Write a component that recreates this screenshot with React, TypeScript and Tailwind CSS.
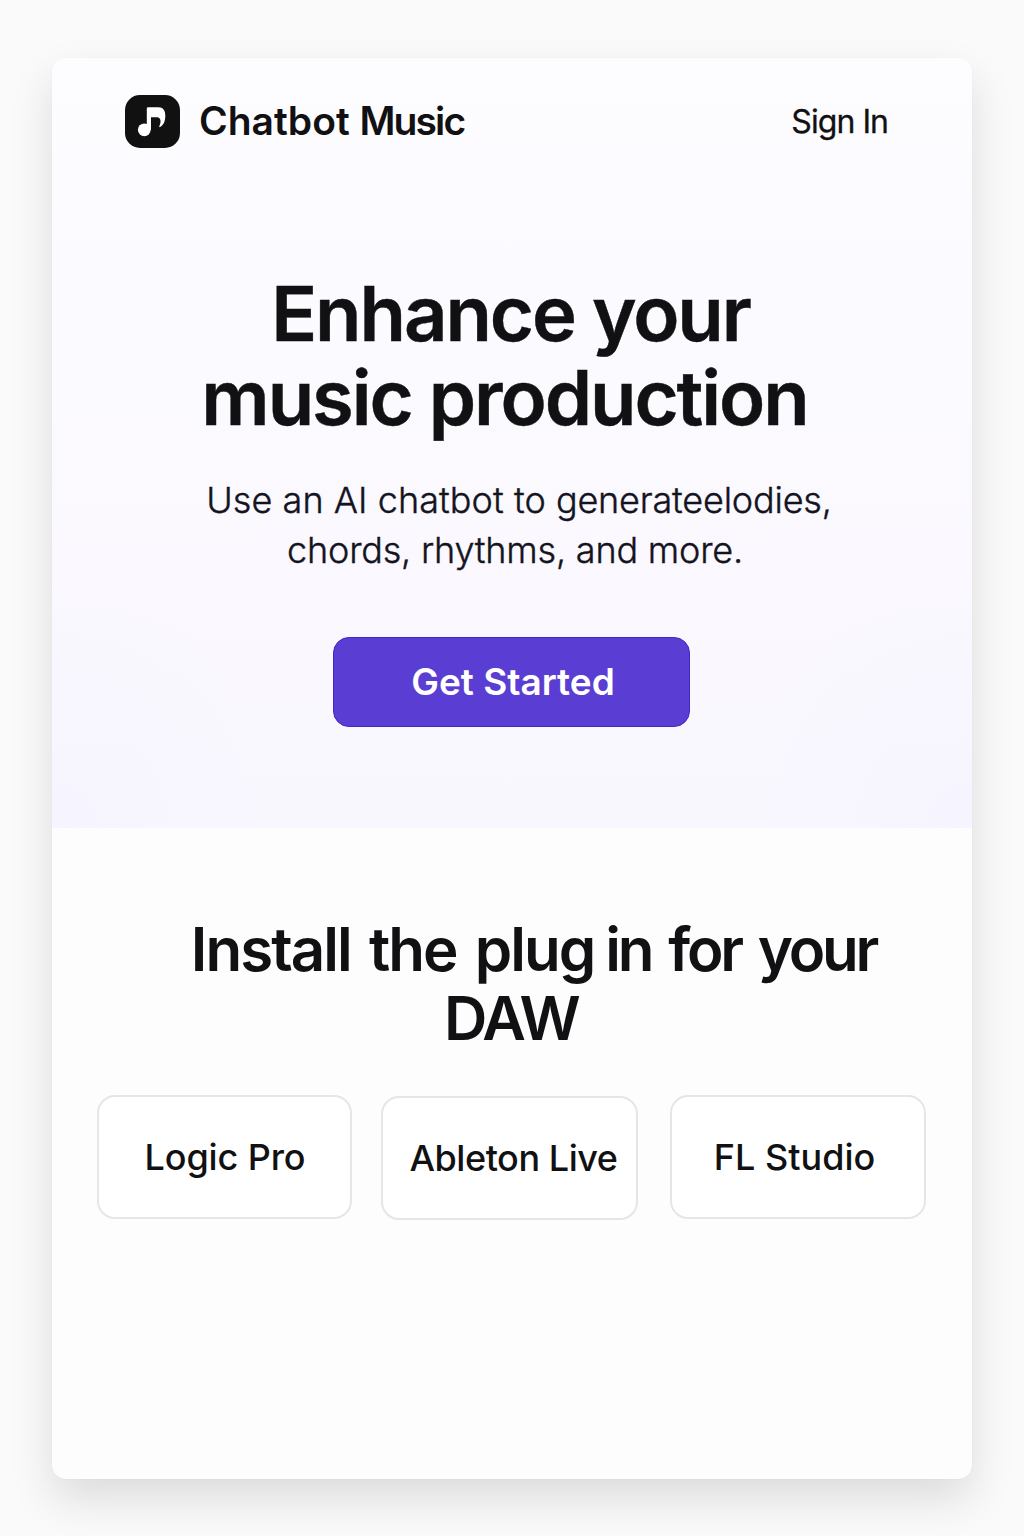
const plugins = [
  { name: 'Logic Pro', card: 'w-[255px] pl-px tracking-[-0.1px]' },
  { name: 'Ableton Live', card: 'ml-[29px] mt-px w-[257px] pb-px pl-[8px] tracking-[-0.45px]' },
  { name: 'FL Studio', card: 'ml-8 w-[256px] pr-[7px]' },
];

function Logo() {
  return (
    <svg width="55" height="53" viewBox="0 0 55 53" className="shrink-0">
      <rect width="55" height="53" rx="15" fill="#111112" />
      <circle cx="19.300" cy="34.800" r="6.400" fill="#fff" />
      <path d="M21.800 35V13.500Q21.800 12.300 23 12.300H33.500C38 12.300 40.300 15.500 40.300 20.500C40.300 26.500 38.500 30.500 34.500 32.200L34.200 31.500C36 28 36.500 23 32.500 22.300H26V35Z" fill="#fff" />
    </svg>
  );
}

export default function App() {
  return (
    <div className="h-[1536px] w-[1024px] overflow-hidden bg-[#fafafa] px-[52px] pt-[58px] font-['Inter',sans-serif] text-[#111113]">
      <main className="flex h-[1421px] flex-col overflow-hidden rounded-[14px] bg-[#fefdfe] shadow-[0_0_1px_rgba(0,0,0,0.08),0_20px_44px_rgba(0,0,0,0.12)]">
        <section className="h-[770px] shrink-0 bg-[radial-gradient(circle_at_0%_100%,#f6f4fe,transparent_240px),radial-gradient(circle_at_100%_100%,#f6f4fe,transparent_240px),linear-gradient(#fdfcff,#f9f7fe)]">
          <header className="flex h-[126px] items-center pl-[73px] pr-[84px]">
            <Logo />
            <span className="ml-[19px] whitespace-nowrap text-[39px] font-semibold">Chatbot <span className="tracking-[-1.9px]">Music</span></span>
            <a className="ml-auto whitespace-nowrap pt-[2px] text-[32px] tracking-[-0.95px] [-webkit-text-stroke:0.3px]">Sign In</a>
          </header>
          <h1 className="mt-[87px] text-center text-[76px] font-semibold leading-[84px] tracking-[-2.1px] [-webkit-text-stroke:0.4px]">
            <span className="block pr-[3px]">Enhance your</span>
            <span className="block pr-[15px]">music production</span>
          </h1>
          <p className="mt-[36px] text-center text-[36px] font-light leading-[50px] tracking-[-0.2px] text-[#14141f] [-webkit-text-stroke:0.4px]">
            <span className="block pl-[14px]"><span className="tracking-[0.05px]">Use an AI chatbot to </span>generateelodies,</span>
            <span className="block pl-[6px]">chords, rhythms, and more.</span>
          </p>
          <button className="ml-[281px] mt-[62px] block h-[90px] w-[357px] rounded-[16px] border border-[#4725c5] bg-[#5a3dd2] pl-[3px] text-[37px] font-semibold text-white">Get Started</button>
        </section>
        <section>
          <h2 className="mt-[87px] text-center text-[60px] font-semibold leading-[69px] tracking-[-1.95px]">
            <span className="block whitespace-nowrap pl-[43px] [word-spacing:5px]">Install the plug<span className="tracking-[-3.2px]"><span className="[word-spacing:-1px]"> in</span> for your</span></span>
            <span className="block pr-[2px] tracking-[-2.6px]">DAW</span>
          </h2>
          <div className="mt-[42px] flex pl-[45px]">
            {plugins.map(({ name, card }) => (
              <div key={name} className={`flex h-[124px] shrink-0 items-center justify-center whitespace-nowrap rounded-[18px] border-2 border-[#e5e6e9] bg-white text-[36px] font-medium ${card}`}>{name}</div>
            ))}
          </div>
        </section>
      </main>
    </div>
  );
}
